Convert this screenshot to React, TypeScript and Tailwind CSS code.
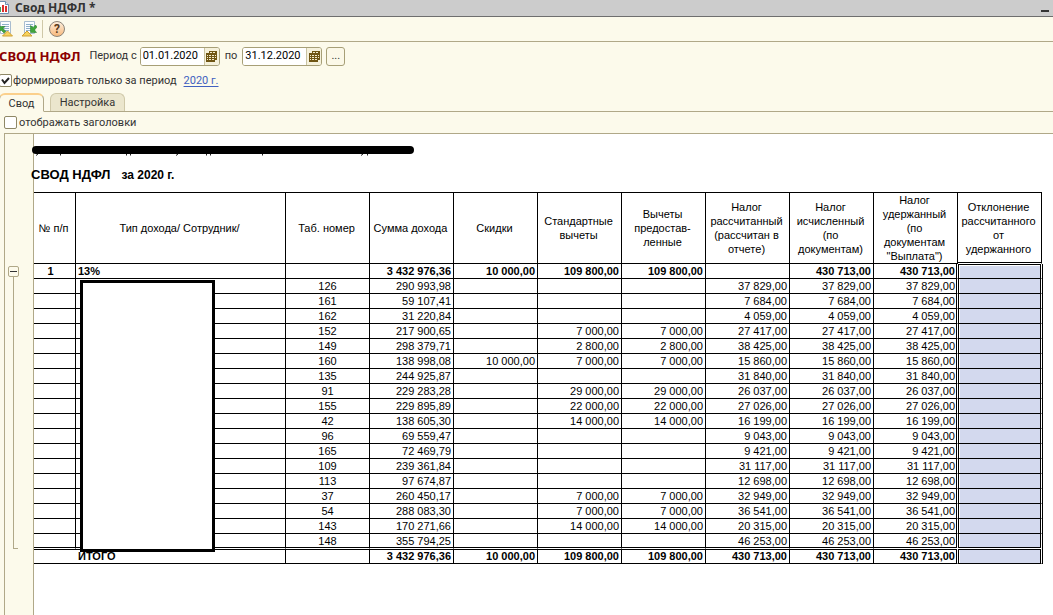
import React from "react";

type Row = {
  id: string;
  income: string;
  discount?: string;
  deduction?: string;
  tax: string;
};

const rows: Row[] = [
  { id: "126", income: "290 993,98", tax: "37 829,00" },
  { id: "161", income: "59 107,41", tax: "7 684,00" },
  { id: "162", income: "31 220,84", tax: "4 059,00" },
  { id: "152", income: "217 900,65", deduction: "7 000,00", tax: "27 417,00" },
  { id: "149", income: "298 379,71", deduction: "2 800,00", tax: "38 425,00" },
  { id: "160", income: "138 998,08", discount: "10 000,00", deduction: "7 000,00", tax: "15 860,00" },
  { id: "135", income: "244 925,87", tax: "31 840,00" },
  { id: "91", income: "229 283,28", deduction: "29 000,00", tax: "26 037,00" },
  { id: "155", income: "229 895,89", deduction: "22 000,00", tax: "27 026,00" },
  { id: "42", income: "138 605,30", deduction: "14 000,00", tax: "16 199,00" },
  { id: "96", income: "69 559,47", tax: "9 043,00" },
  { id: "165", income: "72 469,79", tax: "9 421,00" },
  { id: "109", income: "239 361,84", tax: "31 117,00" },
  { id: "113", income: "97 674,87", tax: "12 698,00" },
  { id: "37", income: "260 450,17", deduction: "7 000,00", tax: "32 949,00" },
  { id: "54", income: "288 083,30", deduction: "7 000,00", tax: "36 541,00" },
  { id: "143", income: "170 271,66", deduction: "14 000,00", tax: "20 315,00" },
  { id: "148", income: "355 794,25", tax: "46 253,00" },
];

const headers = [
  "№ п/п",
  "Тип дохода/ Сотрудник/",
  "Таб. номер",
  "Сумма дохода",
  "Скидки",
  "Стандартные вычеты",
  "Вычеты предостав-\nленные",
  "Налог рассчитанный (рассчитан в отчете)",
  "Налог исчисленный\n(по\nдокументам)",
  "Налог удержанный\n(по\nдокументам \"Выплата\")",
];

type Edge = "first" | "middle" | "beforeTotal" | "total";

const base = "h-[15px] border-r border-b border-black p-0 leading-[14px]";
const number = "pr-0.5 text-right";

const plainEdge: Record<Edge, string> = {
  first: "",
  middle: "",
  beforeTotal: "border-b-white shadow-[inset_0_-1px_0_#000]",
  total: "shadow-[inset_0_1px_0_#000]",
};

const beforeSelected: Record<Edge, string> = {
  first: "border-r-white shadow-[inset_-1px_0_0_#000]",
  middle: "border-r-white shadow-[inset_-1px_0_0_#000]",
  beforeTotal: "border-r-white border-b-white shadow-[inset_-1px_-1px_0_#000]",
  total: "border-r-white shadow-[inset_-1px_1px_0_#000]",
};

const selected: Record<Edge, string> = {
  first:
    "border-r-white shadow-[inset_1px_0_0_#000,inset_-1px_0_0_#000,inset_0_1px_0_#000,inset_2px_2px_0_#fff,1px_0_0_#000]",
  middle: "border-r-white shadow-[inset_1px_0_0_#000,inset_-1px_0_0_#000,inset_2px_0_0_#fff,1px_0_0_#000]",
  beforeTotal:
    "border-r-white border-b-white shadow-[inset_1px_-1px_0_#000,inset_-1px_0_0_#000,inset_2px_0_0_#fff,1px_0_0_#000]",
  total:
    "border-r-white shadow-[inset_1px_1px_0_#000,inset_-1px_0_0_#000,inset_2px_0_0_#fff,1px_0_0_#000]",
};

function Values({ values, edge }: { values: (string | undefined)[]; edge: Edge }) {
  return (
    <>
      {values.map((value, i) => (
        <td
          key={i}
          className={`${base} ${number} ${i === values.length - 1 ? beforeSelected[edge] : plainEdge[edge]}`}
        >
          {value}
        </td>
      ))}
      <td className={`${base} bg-[#d3d9ee] ${selected[edge]}`} />
    </>
  );
}

function ReportIcon() {
  return (
    <svg width="10" height="14" viewBox="0 0 10 14" aria-hidden="true">
      <path d="M0 .5H5.500L8.500 3.500V12.500H0" fill="#fff" stroke="#6d8fae" />
      <path d="M5.500 .5V3.500H8.500" fill="#dbe8f3" stroke="#6d8fae" />
      <path d="M0 6H1V11H0Z" fill="#3ba55a" />
      <path d="M2 4H4V11H2Z" fill="#d9302c" />
      <path d="M5 5H7V11H5Z" fill="#d9302c" />
    </svg>
  );
}

function SheetIcon({ incoming }: { incoming?: boolean }) {
  return (
    <svg width="16" height="16" viewBox="0 0 16 16" aria-hidden="true">
      <path d="M3.500 .5H13.500V12.500H3.500Z" fill="#fbfdff" stroke="#a9bdcf" />
      <path d="M5 3.500H12M5 5.500H12M5 7.500H12M5 9.500H12" stroke="#8fb0ca" />
      {incoming ? (
        <path d="M14.500 4L12 6.500L9.500 4.500V11.500H15.500L13.500 9L16 6Z" fill="#3fa53a" stroke="#1d7a22" strokeWidth=".5" />
      ) : (
        <path d="M2 5.500H8L6 7.500L9 10.500L7 12L4 9L2 11Z" fill="#3fa53a" stroke="#1d7a22" strokeWidth=".5" />
      )}
      <path
        d={incoming ? "M1 15L6 10L11 15Z" : "M5.500 15L10.500 10L15.500 15Z"}
        fill="#f7d35c"
        stroke="#cf9f33"
      />
    </svg>
  );
}

function CalendarIcon() {
  return (
    <svg width="11" height="11" viewBox="0 0 11 11" aria-hidden="true">
      <path d="M3 0H11V9H9V11H0V2H3Z" fill="#6f5514" />
      <path
        d="M4 1h2v1h-2zM7 1h2v1h-2zM1 4h1v1h-1zM3 4h2v1h-2zM6 4h2v1h-2zM9 4h1v1h-1zM1 6h1v1h-1zM3 6h2v1h-2zM6 6h2v1h-2zM9 6h1v1h-1zM1 8h1v1h-1zM3 8h2v1h-2zM6 8h2v1h-2z"
        fill="#f3ebcb"
      />
    </svg>
  );
}

function DateField({ label, value }: { label: string; value: string }) {
  return (
    <div className="flex h-[19px] w-20 shrink-0 overflow-hidden rounded-[3px] border border-[#a79f77] bg-white">
      <input
        aria-label={label}
        defaultValue={value}
        className="w-0 min-w-0 flex-1 bg-white pl-0.5 font-[Roboto,'Liberation_Sans',sans-serif] text-[11px] leading-[18px] text-black outline-none"
      />
      <button
        type="button"
        aria-label={`Календарь: ${label}`}
        className="flex w-[15px] shrink-0 items-center justify-center border-l border-[#c9c3a3] bg-[#f5f1dc]"
      >
        <CalendarIcon />
      </button>
    </div>
  );
}

function CheckBox({ id, checked }: { id: string; checked?: boolean }) {
  return (
    <span className="grid size-[13px] shrink-0">
      <input
        id={id}
        type="checkbox"
        defaultChecked={checked}
        className="peer col-start-1 row-start-1 size-[13px] appearance-none rounded-[2px] border border-[#8f8866] bg-white"
      />
      <svg
        viewBox="0 0 13 13"
        className="pointer-events-none col-start-1 row-start-1 hidden size-[13px] peer-checked:block"
        aria-hidden="true"
      >
        <path d="M3 5.500L5.500 9L10 4" fill="none" stroke="#222" strokeWidth="2" />
      </svg>
    </span>
  );
}

export default function App() {
  return (
    <div className="flex min-h-screen flex-col overflow-hidden bg-[#fcfaeb] font-[Roboto,'Liberation_Sans',sans-serif] text-[11px] leading-[18px] text-[#333]">
      <header className="flex h-[17px] items-center justify-between border-b border-[#6e6e6e] bg-[#ccc] pr-1">
        <div className="flex items-center gap-[5px]">
          <ReportIcon />
          <h1 className="font-['Noto_Sans',sans-serif] text-xs leading-4 font-bold">Свод НДФЛ *</h1>
        </div>
        <button type="button" aria-label="Свернуть" className="mt-1.5 h-0.5 w-2 bg-[#333]" />
      </header>

      <div className="flex h-[25px] items-center border-b border-[#b0a888]">
        <button type="button" aria-label="Сохранить настройки" className="-ml-[3px]">
          <SheetIcon />
        </button>
        <button type="button" aria-label="Восстановить настройки" className="ml-2">
          <SheetIcon incoming />
        </button>
        <span className="mr-1.5 ml-[5px] h-[18px] w-px bg-[#cfc8a8]" />
        <button
          type="button"
          aria-label="Справка"
          className="flex size-4 items-center justify-center rounded-full border border-[#8c8478] bg-gradient-to-b from-[#fdeedb] to-[#f7b97c] text-xs leading-none font-bold text-[#5a3a1c]"
        >
          ?
        </button>
      </div>

      <div className="flex h-7 items-center">
        <h2 className="-ml-px font-['Noto_Sans',sans-serif] text-[13px] font-bold text-[#8b0000]">СВОД НДФЛ</h2>
        <span className="mr-[3px] ml-[9px]">Период с</span>
        <DateField label="Начало периода" value="01.01.2020" />
        <span className="mx-[5px]">по</span>
        <DateField label="Конец периода" value="31.12.2020" />
        <button
          type="button"
          aria-label="Выбрать период"
          className="ml-1 flex h-[19px] w-[19px] items-center justify-center rounded-[3px] border border-[#a79f77] bg-[#fbf8e8]"
        >
          ...
        </button>
      </div>

      <div className="flex h-[21px] items-center">
        <span className="-ml-px flex items-center gap-px">
          <CheckBox id="only-period" checked />
          <label htmlFor="only-period">формировать только за период</label>
        </span>
        <a href="#year" className="ml-[7px] text-[#4060c0] underline underline-offset-2">
          2020 г.
        </a>
      </div>

      <div className="flex h-[21px] items-end gap-1.5 border-b border-[#b0a888]" role="tablist">
        <button
          type="button"
          role="tab"
          aria-selected="true"
          className="-mb-px -ml-px h-[19px] w-[45px] rounded-t-md border border-t-2 border-[#b0a888] border-t-[#fbd08c] border-b-[#fcfaeb] bg-[#fcfaeb]"
        >
          Свод
        </button>
        <button
          type="button"
          role="tab"
          aria-selected="false"
          className="h-[18px] w-[75px] rounded-t-md border border-b-0 border-[#cfc8a8] bg-[#ebe6cd]"
        >
          Настройка
        </button>
      </div>

      <div className="flex h-[21px] items-center gap-0.5 pl-1">
        <CheckBox id="show-titles" />
        <label htmlFor="show-titles">отображать заголовки</label>
      </div>

      <main className="ml-1 flex flex-1 border-t border-l border-[#b0a888]">
        <div className="flex w-[29px] shrink-0 flex-col border-r border-[#b0a888] pt-[132px] pl-[3px]">
          <button
            type="button"
            aria-label="Свернуть группу"
            className="flex size-[11px] items-center justify-center rounded-[2px] border border-[#b0a888]"
          >
            <span className="h-px w-[7px] bg-[#333]" />
          </button>
          <span className="ml-[5px] h-[272px] w-[5px] border-b border-l border-[#b0a888]" />
        </div>

        <div className="min-w-0 flex-1 bg-white pr-[11px] font-['Liberation_Sans',sans-serif] text-black">
          <svg width="384" height="12" viewBox="0 0 384 12" className="mt-3 -ml-0.5 block" aria-hidden="true">
            <rect x="0" y="0" width="382" height="8" rx="4" fill="#000" />
            <path
              d="M4 9.500L6 8M28.500 8V9.500M94.500 8V9.500M98.500 8V9.500M144 9.500L146 8M174.500 8V9.500M178.500 8V9.500M230.500 8V9.500M329 9.500L331 8M335.500 8V9.500"
              stroke="#222"
            />
          </svg>
          <div className="flex h-[34px] items-center gap-[11px] font-bold">
            <span className="-ml-[3px] text-[13px]">СВОД НДФЛ</span>
            <span className="text-xs">за 2020 г.</span>
          </div>

          <table className="w-full table-fixed border-separate border-spacing-0 border-t border-black text-[11px]">
            <colgroup>
              <col className="w-[42px]" />
              <col />
              {headers.slice(1).map((h) => (
                <col key={h} className="w-[84px]" />
              ))}
            </colgroup>
            <thead>
              <tr>
                {headers.map((h) => (
                  <th
                    key={h}
                    className="h-[71px] border-r border-b border-black py-0 pr-0.5 pl-0 leading-[14px] font-normal whitespace-pre-line"
                  >
                    {h}
                  </th>
                ))}
                <th className="border-r border-b border-r-black border-b-white py-0 pr-0.5 pl-0 leading-[14px] font-normal whitespace-pre-line shadow-[inset_0_-1px_0_#000]">
                  {"Отклонение рассчитанного\nот\nудержанного"}
                </th>
              </tr>
            </thead>
            <tbody>
              <tr className="font-bold">
                <td className={`${base} pr-2 text-center`}>1</td>
                <td className={`${base} pl-0.5`}>13%</td>
                <td className={base} />
                <Values
                  edge="first"
                  values={["3 432 976,36", "10 000,00", "109 800,00", "109 800,00", "", "430 713,00", "430 713,00"]}
                />
              </tr>
              {rows.map((r, i) => {
                const edge: Edge = i === rows.length - 1 ? "beforeTotal" : "middle";
                return (
                  <tr key={r.id}>
                    <td className={`${base} ${plainEdge[edge]}`} />
                    <td className={`${base} ${plainEdge[edge]} ${i === 0 ? "relative" : ""}`}>
                      {i === 0 && (
                        <div className="absolute top-px left-1 z-10 h-[272px] w-[135px] border-3 border-black bg-white" />
                      )}
                    </td>
                    <td className={`${base} ${plainEdge[edge]} text-center`}>{r.id}</td>
                    <Values
                      edge={edge}
                      values={[r.income, r.discount, r.deduction, r.deduction, r.tax, r.tax, r.tax]}
                    />
                  </tr>
                );
              })}
              <tr className="font-bold">
                <td colSpan={2} className={`${base} ${plainEdge.total} pl-11`}>
                  ИТОГО
                </td>
                <td className={`${base} ${plainEdge.total}`} />
                <Values
                  edge="total"
                  values={[
                    "3 432 976,36",
                    "10 000,00",
                    "109 800,00",
                    "109 800,00",
                    "430 713,00",
                    "430 713,00",
                    "430 713,00",
                  ]}
                />
              </tr>
            </tbody>
          </table>
        </div>
      </main>
    </div>
  );
}
